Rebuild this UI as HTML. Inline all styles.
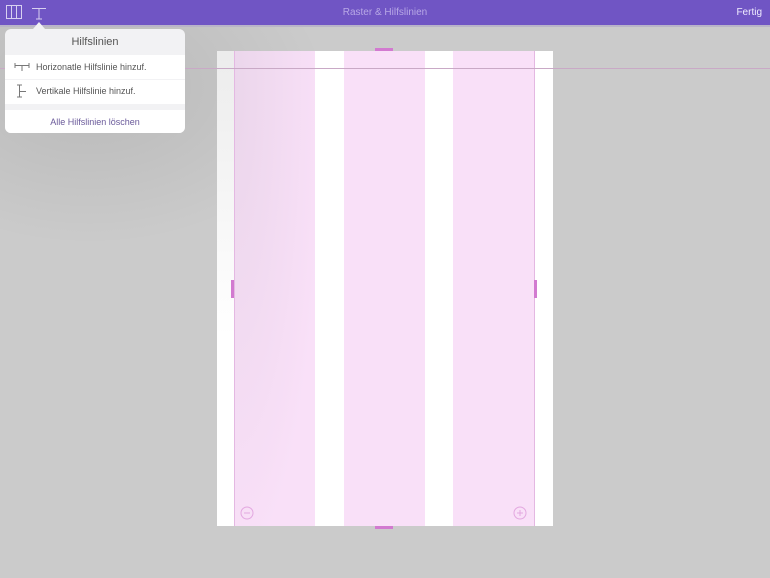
<!DOCTYPE html>
<html><head><style>
body{margin:0;width:770px;height:578px;background:#cbcbcb;position:relative;overflow:hidden;font-family:"Liberation Sans",sans-serif}
.bar{position:absolute;left:0;top:0;width:770px;height:25px;background:#7055c4}
.abs{position:absolute}
.col{position:absolute;top:51px;height:475px;background:#f9e0f8}
</style></head><body>
<div class="bar"></div>
<div class="abs" style="left:0;top:25px;width:770px;height:2px;background:#b9b4c8"></div>
<svg class="abs" style="left:6px;top:5px" width="16" height="14"><rect x="0.5" y="0.5" width="15" height="13" fill="none" stroke="#d8d0f0"/><line x1="5.5" y1="0" x2="5.5" y2="14" stroke="#d8d0f0"/><line x1="10.5" y1="0" x2="10.5" y2="14" stroke="#d8d0f0"/></svg>
<svg class="abs" style="left:31px;top:4px" width="16" height="16" stroke="#d8d0f0" fill="none"><line x1="1" y1="4.5" x2="15" y2="4.5"/><line x1="8" y1="4" x2="8" y2="15"/><line x1="5" y1="15" x2="11" y2="15"/></svg>
<div class="abs" style="left:0;top:7px;width:770px;text-align:center;font-size:10px;color:#b8a8e6">Raster &amp; Hilfslinien</div>
<div class="abs" style="right:8px;top:7px;font-size:10px;color:#f0ecff">Fertig</div>

<div class="abs" style="left:0;top:27px;width:330px;height:220px;background:radial-gradient(ellipse at 90px 60px,rgba(0,0,0,0.09),rgba(0,0,0,0) 70%)"></div>
<div class="abs" style="left:217px;top:51px;width:336px;height:475px;background:#fff"></div>
<div class="abs" style="left:217px;top:51px;width:17px;height:475px;background:linear-gradient(#ececec,#fff 60%)"></div>
<div class="col" style="left:234px;width:81px;background:radial-gradient(ellipse at 0 40px,#ebd6eb,#f9e0f8 90px)"></div>
<div class="col" style="left:344px;width:81px"></div>
<div class="col" style="left:453px;width:82px"></div>
<div class="abs" style="left:234px;top:51px;width:1px;height:475px;background:#e4b8e2"></div>
<div class="abs" style="left:534px;top:51px;width:1px;height:475px;background:#e4b8e2"></div>
<div class="abs" style="left:0;top:68px;width:770px;height:1px;background:#c9a9c6"></div>
<div class="abs" style="left:375px;top:48px;width:18px;height:3px;background:#d27ad0"></div>
<div class="abs" style="left:375px;top:526px;width:18px;height:3px;background:#d27ad0"></div>
<div class="abs" style="left:231px;top:280px;width:3px;height:18px;background:#d27ad0"></div>
<div class="abs" style="left:534px;top:280px;width:3px;height:18px;background:#d27ad0"></div>
<svg class="abs" style="left:240px;top:506px" width="14" height="14" stroke="#e3a8e0" fill="none"><circle cx="7" cy="7" r="6"/><line x1="4" y1="7" x2="10" y2="7"/></svg>
<svg class="abs" style="left:513px;top:506px" width="14" height="14" stroke="#e3a8e0" fill="none"><circle cx="7" cy="7" r="6"/><line x1="4" y1="7" x2="10" y2="7"/><line x1="7" y1="4" x2="7" y2="10"/></svg>

<div class="abs" style="left:5px;top:29px;width:180px;height:104px;background:#f2f2f4;border-radius:6px;overflow:hidden">
 <div style="height:25px;line-height:27px;text-align:center;font-size:11px;color:#555">Hilfslinien</div>
 <div style="height:24px;background:#fff;margin-top:1px;font-size:9px;color:#555;line-height:24px;padding-left:31px;position:relative">Horizonatle Hilfslinie hinzuf.
  <svg style="position:absolute;left:9px;top:8px" width="16" height="8" stroke="#777" fill="none"><line x1="1" y1="2.5" x2="15" y2="2.5"/><line x1="8" y1="2" x2="8" y2="8"/><line x1="1" y1="0" x2="1" y2="5"/><line x1="15" y1="0" x2="15" y2="5"/></svg></div>
 <div style="height:24px;background:#fff;margin-top:1px;font-size:9px;color:#555;line-height:22px;padding-left:31px;position:relative">Vertikale Hilfslinie hinzuf.
  <svg style="position:absolute;left:10px;top:4px" width="12" height="14" stroke="#777" fill="none"><line x1="4.5" y1="1" x2="4.5" y2="13"/><line x1="2" y1="1" x2="7" y2="1"/><line x1="2" y1="13" x2="7" y2="13"/><line x1="4" y1="7.5" x2="11" y2="7.5"/></svg></div>
 <div style="position:absolute;top:81px;left:0;width:180px;height:23px;background:#fff;text-align:center;line-height:25px;font-size:9px;color:#6a5a9a">Alle Hilfslinien löschen</div>
</div>
<div class="abs" style="left:33px;top:22px;width:0;height:0;border-left:6px solid transparent;border-right:6px solid transparent;border-bottom:7px solid #f2f2f4"></div>
</body></html>
